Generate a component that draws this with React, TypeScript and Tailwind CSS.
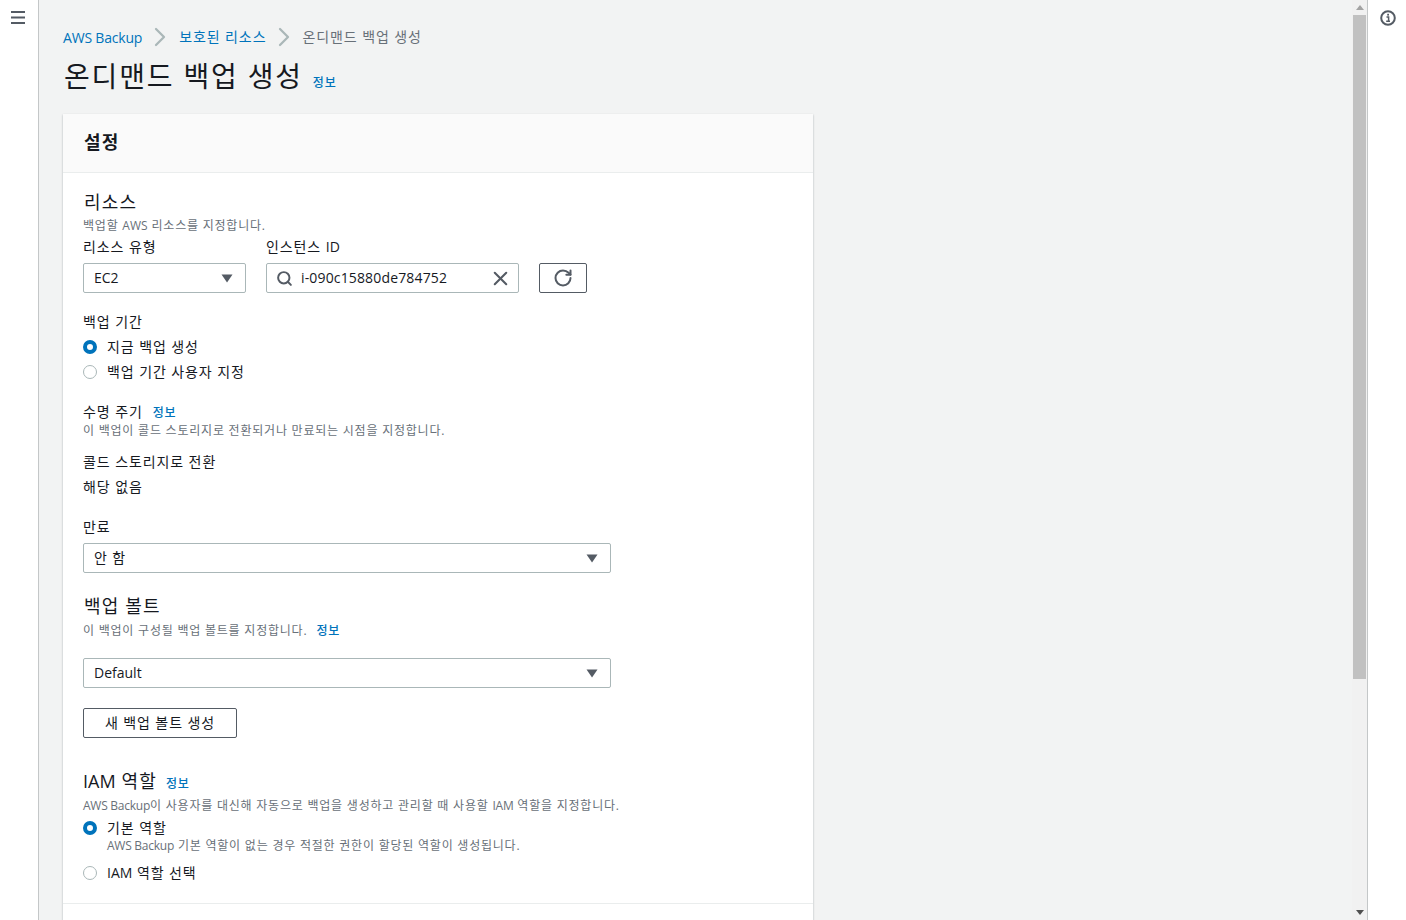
import React from "react";
import { ChevronRight, Search, X, RotateCw } from "lucide-react";

const font = "font-['Open_Sans','Noto_Sans_CJK_KR',sans-serif]";

// latin runs keep normal spacing, the korean text around them is spaced wider
function L({ children }: { children: React.ReactNode }) {
  return <span className="!tracking-normal">{children}</span>;
}

// same thing for the small grey help lines, where the latin is a bit tighter
function Ls({ children }: { children: React.ReactNode }) {
  return <span className="!tracking-[-0.25px]">{children}</span>;
}

function Caret() {
  return (
    <svg width="12" height="9" viewBox="0 0 12 9">
      <path d="M0.5 0.5 H11.5 L6 8.5 Z" fill="#545b64" />
    </svg>
  );
}

function Select({ value, width }: { value: React.ReactNode; width: string }) {
  return (
    <div className={`${width} h-[30px] flex items-center justify-between bg-white border border-[#aab7b8] rounded-[2px] pl-[10px] pr-[12px] text-[14px] text-[#16191f]`}>
      <span>{value}</span>
      <Caret />
    </div>
  );
}

function Radio({ checked, label }: { checked?: boolean; label: React.ReactNode }) {
  return (
    <div className="flex items-center h-[20px] text-[14px] text-[#16191f]">
      {checked ? (
        <span className="w-[14px] h-[14px] rounded-full border-[4px] border-[#0073bb] bg-white" />
      ) : (
        <span className="w-[14px] h-[14px] rounded-full border border-[#aab7b8] bg-white" />
      )}
      <span className="ml-[10px]">{label}</span>
    </div>
  );
}

export default function App() {
  return (
    <div className={`${font} h-[920px] w-[1406px] overflow-hidden flex bg-white leading-[20px] [&_*]:tracking-[0.065em]`}>
      <div className="w-[39px] shrink-0 border-r border-[#c4c7c8] pt-[8px] pl-[11px]">
        <svg width="14" height="20" viewBox="0 0 14 20">
          <path d="M0 4 H14 M0 9.5 H14 M0 15 H14" stroke="#545b64" strokeWidth="2" />
        </svg>
      </div>

      <main className="flex-1 bg-[#f2f3f3] pl-[24px] pt-[27px] overflow-hidden">
        <div className="flex items-center h-[20px]">
          <a className="text-[14px] text-[#0073bb] !tracking-[-0.2px] mt-[2px]">AWS Backup</a>
          <ChevronRight size={32} strokeWidth={1.7} className="text-[#aab7b8] ml-[2px] mr-[3px]" />
          <a className="text-[14px] text-[#0073bb]">보호된 리소스</a>
          <ChevronRight size={32} strokeWidth={1.7} className="text-[#aab7b8] ml-[2px] mr-[2px]" />
          <span className="text-[14px] text-[#687078]">온디맨드 백업 생성</span>
        </div>
        <div className="flex items-end mt-[9px] h-[38px]">
          <h1 className="ml-[1px] text-[28px] leading-[36px] font-normal text-[#16191f]">온디맨드 백업 생성</h1>
          <a className="text-[12px] leading-[16px] font-medium text-[#0073bb] ml-[10px] mb-[3px]">정보</a>
        </div>

        <section className="mt-[20px] w-[750px] bg-white shadow-[0_1px_2px_rgba(0,28,36,0.3)]">
          <div className="h-[59px] bg-[#fafafa] border-b border-[#eaeded] pl-[21px] pb-[3px] flex items-center">
            <h2 className="text-[18px] font-bold text-[#16191f]">설정</h2>
          </div>

          <div className="pl-[20px]">
            <h3 className="pl-[1px] pt-[17px] text-[18px] leading-[24px] font-normal text-[#16191f]">리소스</h3>
            <p className="text-[12px] leading-[16px] text-[#687078] mt-[4px]">백업할 <L>AWS</L> 리소스를 지정합니다.</p>

            <div className="flex items-end mt-[3px]">
              <div>
                <div className="text-[14px] h-[20px] text-[#16191f] mb-[6px]">리소스 유형</div>
                <Select value={<L>EC2</L>} width="w-[163px]" />
              </div>
              <div className="ml-[20px]">
                <div className="text-[14px] h-[20px] text-[#16191f] mb-[6px]">인스턴스 <L>ID</L></div>
                <div className="w-[253px] h-[30px] flex items-center bg-white border border-[#aab7b8] rounded-[2px] pl-[9px] pr-[6px] text-[14px] text-[#16191f]">
                  <Search size={17} strokeWidth={2.8} className="text-[#545b64]" />
                  <span className="ml-[8px] flex-1 !tracking-[0.15px]">i-090c15880de784752</span>
                  <X size={23} strokeWidth={2.2} className="text-[#545b64]" />
                </div>
              </div>
              <button className="ml-[20px] w-[48px] h-[30px] flex items-center justify-center bg-white border border-[#545b64] rounded-[2px]">
                <RotateCw size={20} strokeWidth={2.4} className="text-[#545b64]" />
              </button>
            </div>

            <div className="text-[14px] text-[#16191f] mt-[19px]">백업 기간</div>
            <div className="mt-[5px]">
              <Radio checked label="지금 백업 생성" />
            </div>
            <div className="mt-[5px]">
              <Radio label="백업 기간 사용자 지정" />
            </div>

            <div className="flex items-baseline mt-[20px] text-[14px] text-[#16191f]">
              <span>수명 주기</span>
              <a className="text-[12px] font-medium text-[#0073bb] ml-[10px]">정보</a>
            </div>
            <p className="text-[12px] leading-[16px] text-[#687078]">이 백업이 콜드 스토리지로 전환되거나 만료되는 시점을 지정합니다.</p>

            <div className="text-[14px] text-[#16191f] mt-[13px]">콜드 스토리지로 전환</div>
            <div className="text-[14px] text-[#16191f] mt-[5px]">해당 없음</div>

            <div className="text-[14px] text-[#16191f] mt-[20px] mb-[6px]">만료</div>
            <Select value="안 함" width="w-[528px]" />

            <h3 className="pl-[1px] mt-[21px] text-[18px] leading-[24px] font-normal text-[#16191f]">백업 볼트</h3>
            <p className="text-[12px] leading-[16px] text-[#687078] mt-[5px] flex items-baseline">
              이 백업이 구성될 백업 볼트를 지정합니다.
              <a className="text-[#0073bb] font-medium ml-[9px]">정보</a>
            </p>
            <div className="mt-[19px]">
              <Select value={<L>Default</L>} width="w-[528px]" />
            </div>
            <button className="mt-[20px] block w-[154px] h-[30px] bg-white border border-[#545b64] rounded-[2px] text-[14px] text-[#16191f]">
              새 백업 볼트 생성
            </button>

            <div className="flex items-baseline mt-[31px]">
              <h3 className="text-[18px] leading-[24px] font-normal text-[#16191f]"><L>IAM</L> 역할</h3>
              <a className="text-[12px] font-medium text-[#0073bb] ml-[9px]">정보</a>
            </div>
            <p className="text-[12px] leading-[16px] text-[#687078] mt-[4px]">
              <Ls>AWS Backup</Ls>이 사용자를 대신해 자동으로 백업을 생성하고 관리할 때 사용할 <Ls>IAM</Ls> 역할을 지정합니다.
            </p>
            <div className="mt-[4px]">
              <Radio checked label="기본 역할" />
            </div>
            <p className="text-[12px] leading-[16px] text-[#687078] ml-[24px]">
              <Ls>AWS Backup</Ls> 기본 역할이 없는 경우 적절한 권한이 할당된 역할이 생성됩니다.
            </p>
            <div className="mt-[9px]">
              <Radio label={<><L>IAM</L> 역할 선택</>} />
            </div>
          </div>
          <div className="mt-[20px] border-t border-[#eaeded] h-[40px]" />
        </section>
      </main>

      {/* scrollbar */}
      <div className="w-[15px] shrink-0 bg-[#f1f1f1] flex flex-col items-center">
        <div className="h-[15px] flex items-center justify-center">
          <svg width="8" height="5" viewBox="0 0 8 5"><path d="M4 0 L8 5 H0 Z" fill="#a3a3a3" /></svg>
        </div>
        <div className="w-[13px] h-[664px] bg-[#c1c1c1]" />
        <div className="flex-1" />
        <div className="h-[15px] flex items-center justify-center">
          <svg width="8" height="5" viewBox="0 0 8 5"><path d="M0 0 H8 L4 5 Z" fill="#505050" /></svg>
        </div>
      </div>

      <div className="w-[39px] shrink-0 border-l border-[#c4c7c8] pt-[10px] pl-[12px]">
        <svg width="16" height="16" viewBox="0 0 16 16">
          <circle cx="8" cy="8" r="6.8" fill="none" stroke="#545b64" strokeWidth="2" />
          <path d="M6.5 7 H8.6 V11 M6.2 11.2 H10" fill="none" stroke="#545b64" strokeWidth="1.5" />
          <rect x="7.2" y="3.8" width="1.8" height="1.8" fill="#545b64" />
        </svg>
      </div>
    </div>
  );
}
